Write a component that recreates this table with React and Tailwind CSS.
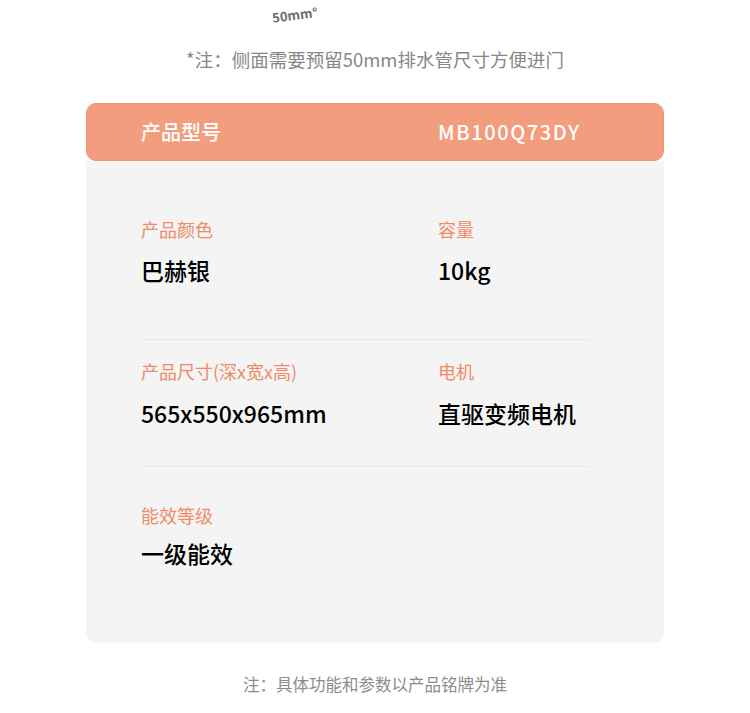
const specs = [
  {
    rowClass: 'h-[179px] pt-[55px] border-b border-[#e8e8e8]',
    gap: 'mt-[11px]',
    items: [
      { label: '产品颜色', value: '巴赫银' },
      { label: '容量', value: '10kg' },
    ],
  },
  {
    rowClass: 'h-[127px] pt-[18px] border-b border-[#e8e8e8]',
    gap: 'mt-[12px]',
    items: [
      { label: '产品尺寸(深x宽x高)', value: '565x550x965mm' },
      { label: '电机', value: '直驱变频电机' },
    ],
  },
  {
    rowClass: 'h-[175px] pt-[35px]',
    gap: 'mt-[8px]',
    items: [{ label: '能效等级', value: '一级能效' }],
  },
]

export default function App() {
  return (
    <div className="w-[750px] h-[713px] bg-white overflow-hidden font-['Noto_Sans_CJK_SC','Noto_Sans',sans-serif]">
      <div className="h-[30px] pl-[272px] pt-[1px]">
        <span className="inline-block -rotate-[7deg] text-[13px] font-bold text-[#6f6a66] leading-none">
          50mm°
        </span>
      </div>

      <div className="h-[60px] flex items-center justify-center text-[18.5px] text-[#8a8684]">
        *注：侧面需要预留50mm排水管尺寸方便进门
      </div>

      <div className="mt-[13px] mx-[86px] w-[578px]">
        <div className="h-[58px] rounded-[10px] bg-[#f19d7e] border border-[#ee9474] flex items-center pl-[54px] text-white text-[20px] font-medium">
          <span className="w-[297px]">产品型号</span>
          <span className="tracking-[1.6px]">MB100Q73DY</span>
        </div>

        <div className="h-[482px] bg-[#f4f4f4] rounded-b-[10px] pl-[55px] pr-[75px]">
          {specs.map((row, i) => (
            <div key={i} className={`flex ${row.rowClass}`}>
              {row.items.map((item) => (
                <div key={item.label} className="w-[297px] shrink-0">
                  <div className="text-[18px] leading-[27px] text-[#ef8b67]">{item.label}</div>
                  <div className={`${row.gap} text-[23px] leading-[33px] font-medium text-black`}>
                    {item.value}
                  </div>
                </div>
              ))}
            </div>
          ))}
        </div>
      </div>

      <div className="mt-[29px] text-center text-[16.5px] text-[#8f8b89]">
        注：具体功能和参数以产品铭牌为准
      </div>
    </div>
  )
}
